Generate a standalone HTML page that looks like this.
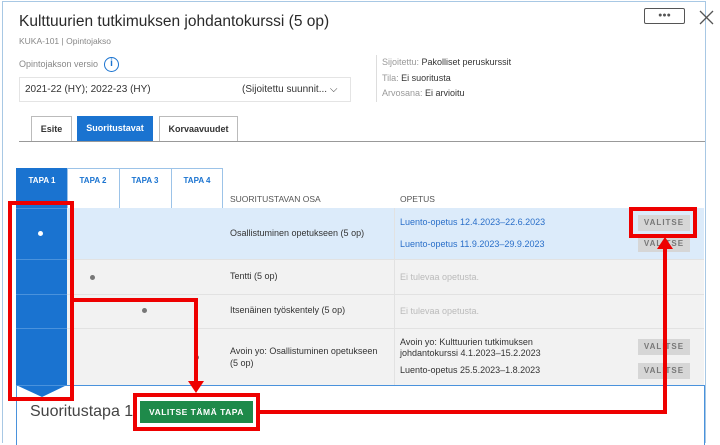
<!DOCTYPE html>
<html><head><meta charset="utf-8"><style>
*{box-sizing:border-box;margin:0;padding:0}
body{width:720px;height:443px;overflow:hidden;background:#fff;font-family:"Liberation Sans",sans-serif;position:relative;color:#333}
.a{position:absolute;white-space:nowrap}
.btn{position:absolute;background:#d6d6d6;color:#777;font-size:8px;font-weight:bold;letter-spacing:1px;text-align:center;line-height:16px;width:52px;height:16px;left:638px}
.red{position:absolute;border:4px solid #e00}
.dot{position:absolute;width:5px;height:5px;border-radius:50%;background:#777}
</style></head><body>
<div class="a" style="left:2px;top:1px;width:704px;height:442px;border:1px solid #a8c8e4;border-bottom:none"></div>
<div class="a" style="left:19px;top:13px;font-size:15.5px;color:#2a2a2a">Kulttuurien tutkimuksen johdantokurssi (5 op)</div>
<div class="a" style="left:19px;top:36px;font-size:8.5px;color:#888">KUKA-101 | Opintojakso</div>
<div class="a" style="left:19px;top:59px;font-size:9px;color:#888">Opintojakson versio</div>
<div class="a" style="left:104px;top:57px;width:15px;height:15px;border:1.5px solid #1a73d0;border-radius:50%;color:#1a73d0;font-size:10px;font-weight:bold;text-align:center;line-height:12px">i</div>
<div class="a" style="left:19px;top:77px;width:332px;height:25px;border:1px solid #e4e4e4;font-size:10px;line-height:23px;padding-left:5px;color:#333">2021-22 (HY); 2022-23 (HY)<span style="position:absolute;left:222px">(Sijoitettu suunnit... ⌵</span></div>
<div class="a" style="left:376px;top:55px;border-left:1px solid #ddd;padding-left:5px;font-size:9px;line-height:15.5px;color:#999">Sijoitettu: <span style="color:#333">Pakolliset peruskurssit</span><br>Tila: <span style="color:#333">Ei suoritusta</span><br>Arvosana: <span style="color:#333">Ei arvioitu</span></div>
<div class="a" style="left:644px;top:8px;width:41px;height:16px;border:1px solid #555;border-radius:2px;text-align:center;font-size:7px;line-height:13px;color:#555">●●●</div>
<svg class="a" style="left:699px;top:10px" width="15" height="15"><path d="M1 1L14 14M14 1L1 14" stroke="#555" stroke-width="1.3"/></svg>
<div class="a" style="left:31px;top:116px;width:41px;height:26px;border:1px solid #bbb;border-bottom:none;font-size:9px;font-weight:bold;text-align:center;line-height:25px">Esite</div>
<div class="a" style="left:77px;top:116px;width:76px;height:26px;background:#1a73d0;color:#fff;font-size:9px;font-weight:bold;text-align:center;line-height:25px">Suoritustavat</div>
<div class="a" style="left:159px;top:116px;width:79px;height:26px;border:1px solid #bbb;border-bottom:none;font-size:9px;font-weight:bold;text-align:center;line-height:25px">Korvaavuudet</div>
<div class="a" style="left:19px;top:141px;width:686px;height:1px;background:#999"></div>
<div class="a" style="left:16px;top:168px;width:207px;height:40px;border:1px solid #9cc3e8;border-bottom:none"></div>
<div class="a" style="left:16px;top:168px;width:51px;height:217px;background:#1a73d0"></div>
<div class="a" style="left:16px;top:385px;width:0;height:0;border-left:26px solid transparent;border-right:25px solid transparent;border-top:12px solid #1a73d0"></div>
<div class="a" style="left:17px;top:176px;width:50px;text-align:center;color:#fff;font-size:8px;font-weight:bold">TAPA 1</div>
<div class="a" style="left:67px;top:168px;width:1px;height:40px;background:#9cc3e8"></div>
<div class="a" style="left:119px;top:168px;width:1px;height:40px;background:#9cc3e8"></div>
<div class="a" style="left:171px;top:168px;width:1px;height:40px;background:#9cc3e8"></div>
<div class="a" style="left:67px;top:176px;width:52px;text-align:center;color:#1a73d0;font-size:8px;font-weight:bold">TAPA 2</div>
<div class="a" style="left:119px;top:176px;width:52px;text-align:center;color:#1a73d0;font-size:8px;font-weight:bold">TAPA 3</div>
<div class="a" style="left:171px;top:176px;width:52px;text-align:center;color:#1a73d0;font-size:8px;font-weight:bold">TAPA 4</div>
<div class="a" style="left:230px;top:194px;font-size:8.5px;color:#555">SUORITUSTAVAN OSA</div>
<div class="a" style="left:400px;top:194px;font-size:8.5px;color:#555">OPETUS</div>
<div class="a" style="left:67px;top:208px;width:637px;height:51px;background:#dcebfa"></div>
<div class="a" style="left:67px;top:259px;width:637px;height:126px;background:#f2f2f2"></div>
<div class="a" style="left:67px;top:259px;width:637px;height:1px;background:#e2e2e2"></div>
<div class="a" style="left:67px;top:294px;width:637px;height:1px;background:#e2e2e2"></div>
<div class="a" style="left:67px;top:328px;width:637px;height:1px;background:#e2e2e2"></div>
<div class="a" style="left:16px;top:259px;width:51px;height:1px;background:#4a92dc"></div>
<div class="a" style="left:16px;top:294px;width:51px;height:1px;background:#4a92dc"></div>
<div class="a" style="left:16px;top:328px;width:51px;height:1px;background:#4a92dc"></div>
<div class="a" style="left:16px;top:208px;width:51px;height:1px;background:#4a92dc"></div>
<div class="a" style="left:394px;top:208px;width:1px;height:177px;background:#e2e2e2"></div>
<div class="dot" style="left:38px;top:231px;background:#fff"></div>
<div class="dot" style="left:90px;top:275px"></div>
<div class="dot" style="left:142px;top:308px"></div>
<div class="dot" style="left:194px;top:355px"></div>
<div class="a" style="left:230px;top:228px;font-size:9px">Osallistuminen opetukseen (5 op)</div>
<div class="a" style="left:230px;top:271px;font-size:9px">Tentti (5 op)</div>
<div class="a" style="left:230px;top:305px;font-size:9px">Itsenäinen työskentely (5 op)</div>
<div class="a" style="left:230px;top:345px;font-size:9px;line-height:12px">Avoin yo: Osallistuminen opetukseen<br>(5 op)</div>
<div class="a" style="left:400px;top:217px;font-size:9px;color:#2a6fc9">Luento-opetus 12.4.2023–22.6.2023</div>
<div class="a" style="left:400px;top:239px;font-size:9px;color:#2a6fc9">Luento-opetus 11.9.2023–29.9.2023</div>
<div class="a" style="left:400px;top:272px;font-size:9px;color:#bbb">Ei tulevaa opetusta.</div>
<div class="a" style="left:400px;top:306px;font-size:9px;color:#bbb">Ei tulevaa opetusta.</div>
<div class="a" style="left:400px;top:337px;font-size:9px;line-height:11px">Avoin yo: Kulttuurien tutkimuksen<br>johdantokurssi 4.1.2023–15.2.2023</div>
<div class="a" style="left:400px;top:365px;font-size:9px">Luento-opetus 25.5.2023–1.8.2023</div>
<div class="btn" style="top:215px">VALITSE</div>
<div class="btn" style="top:236px">VALITSE</div>
<div class="btn" style="top:339px">VALITSE</div>
<div class="btn" style="top:363px">VALITSE</div>
<div class="a" style="left:16px;top:385px;width:689px;height:60px;border:1px solid #4a92dc;border-bottom:none"></div>
<div class="a" style="left:30px;top:403px;font-size:16px;color:#444">Suoritustapa 1</div>
<div class="a" style="left:140px;top:401px;width:113px;height:22px;background:#1e8a4a;color:#fff;font-size:8.5px;font-weight:bold;text-align:center;line-height:22px;letter-spacing:.5px">VALITSE TÄMÄ TAPA</div>
<div class="red" style="left:8px;top:201px;width:66px;height:200px"></div>
<div class="red" style="left:133px;top:393px;width:127px;height:38px"></div>
<div class="red" style="left:629px;top:207px;width:68px;height:31px"></div>
<div class="a" style="left:74px;top:298px;width:124px;height:4px;background:#e00"></div>
<div class="a" style="left:194px;top:298px;width:4px;height:86px;background:#e00"></div>
<div class="a" style="left:188px;top:381px;border-left:8px solid transparent;border-right:8px solid transparent;border-top:12px solid #e00"></div>
<div class="a" style="left:260px;top:410px;width:407px;height:4px;background:#e00"></div>
<div class="a" style="left:663px;top:248px;width:4px;height:166px;background:#e00"></div>
<div class="a" style="left:657px;top:237px;border-left:8px solid transparent;border-right:8px solid transparent;border-bottom:12px solid #e00"></div>
</body></html>
